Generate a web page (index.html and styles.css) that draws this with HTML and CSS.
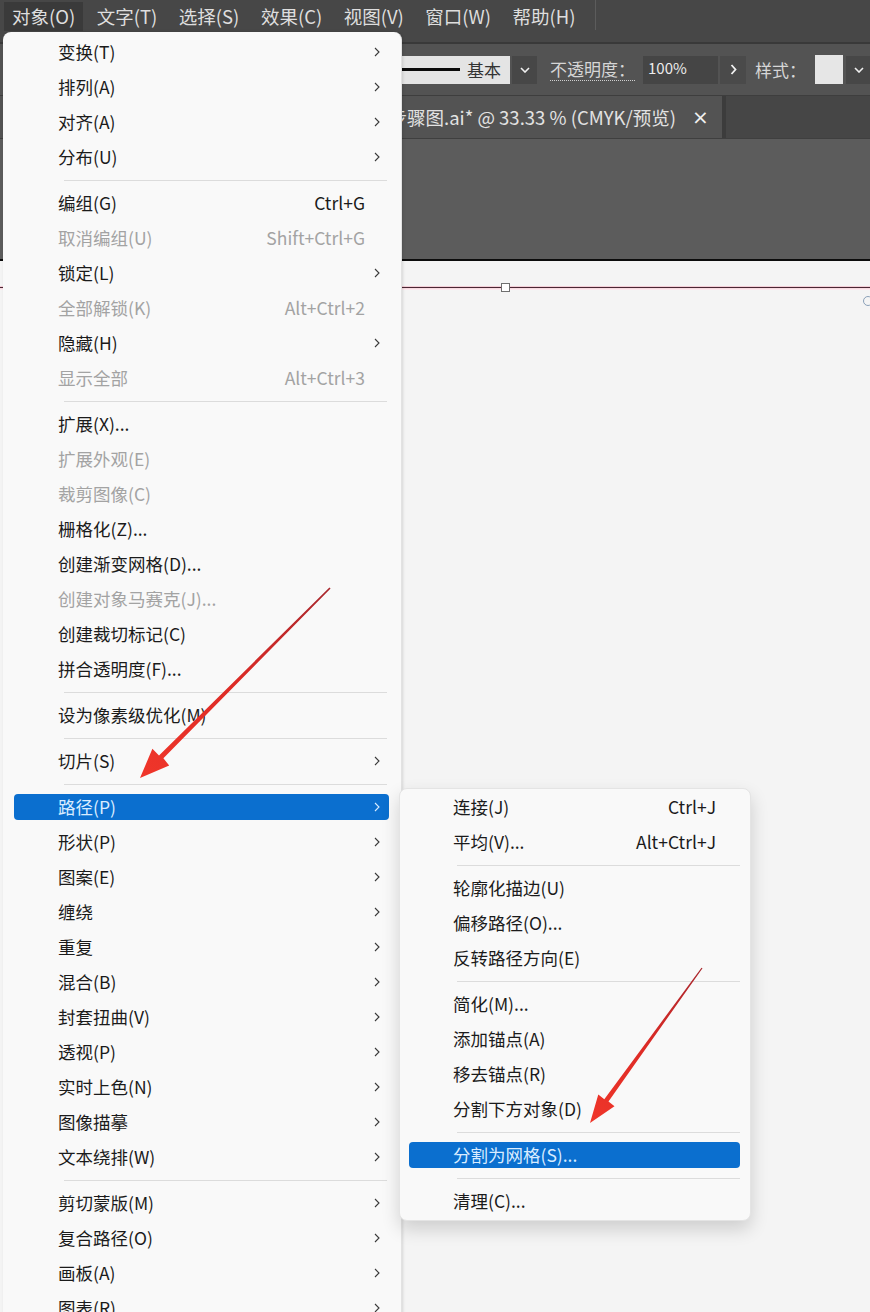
FILE: index.html
```html
<!DOCTYPE html>
<html>
<head>
    <title>对象菜单</title>
    <link rel="stylesheet" href="styles.css">
</head>
<body>
    <div class="app">
        <div class="menubar">
            <span class="top-item current">对象(O)</span>
            <span class="top-item">文字(T)</span>
            <span class="top-item">选择(S)</span>
            <span class="top-item">效果(C)</span>
            <span class="top-item">视图(V)</span>
            <span class="top-item">窗口(W)</span>
            <span class="top-item">帮助(H)</span>
            <span class="bar-split"></span>
        </div>
        <div class="toolbar">
            <div class="stroke-box">
                <span class="stroke-line"></span>
                <span class="stroke-name">基本</span>
            </div>
            <span class="drop"><svg width="10" height="6" viewBox="0 0 10 6"><path d="M1 1 L5 5 L9 1" fill="none" stroke="currentColor" stroke-width="1.6"/></svg></span>
            <span class="tool-label dotted">不透明度：</span>
            <span class="field">100%</span>
            <span class="step"><svg width="7" height="11" viewBox="0 0 7 11"><path d="M1.5 1 L5.5 5.5 L1.5 10" fill="none" stroke="currentColor" stroke-width="1.8"/></svg></span>
            <span class="tool-label style-label">样式：</span>
            <span class="swatch"></span>
            <span class="drop"><svg width="10" height="6" viewBox="0 0 10 6"><path d="M1 1 L5 5 L9 1" fill="none" stroke="currentColor" stroke-width="1.6"/></svg></span>
        </div>
        <div class="tabs">
            <div class="tab">
                <span class="tab-title">步骤图.ai* @ 33.33 % (CMYK/预览)</span>
                <span class="tab-close">×</span>
            </div>
            <div class="tab-rest"></div>
        </div>
        <div class="pasteboard"></div>
        <div class="canvas">
            <div class="artboard-edge"></div>
            <span class="handle"></span>
            <span class="ring"></span>
        </div>
    </div>

    <div class="menu main-menu">
        <div class="item"><span class="label">变换(T)</span><span class="sub"><svg width="6" height="10" viewBox="0 0 6 10"><path d="M1 1 L5 5 L1 9" fill="none" stroke="currentColor" stroke-width="1.1"/></svg></span></div>
        <div class="item"><span class="label">排列(A)</span><span class="sub"><svg width="6" height="10" viewBox="0 0 6 10"><path d="M1 1 L5 5 L1 9" fill="none" stroke="currentColor" stroke-width="1.1"/></svg></span></div>
        <div class="item"><span class="label">对齐(A)</span><span class="sub"><svg width="6" height="10" viewBox="0 0 6 10"><path d="M1 1 L5 5 L1 9" fill="none" stroke="currentColor" stroke-width="1.1"/></svg></span></div>
        <div class="item"><span class="label">分布(U)</span><span class="sub"><svg width="6" height="10" viewBox="0 0 6 10"><path d="M1 1 L5 5 L1 9" fill="none" stroke="currentColor" stroke-width="1.1"/></svg></span></div>
        <div class="sep"></div>
        <div class="item"><span class="label">编组(G)</span><span class="key">Ctrl+G</span><span class="sub"></span></div>
        <div class="item off"><span class="label">取消编组(U)</span><span class="key">Shift+Ctrl+G</span><span class="sub"></span></div>
        <div class="item"><span class="label">锁定(L)</span><span class="sub"><svg width="6" height="10" viewBox="0 0 6 10"><path d="M1 1 L5 5 L1 9" fill="none" stroke="currentColor" stroke-width="1.1"/></svg></span></div>
        <div class="item off"><span class="label">全部解锁(K)</span><span class="key">Alt+Ctrl+2</span><span class="sub"></span></div>
        <div class="item"><span class="label">隐藏(H)</span><span class="sub"><svg width="6" height="10" viewBox="0 0 6 10"><path d="M1 1 L5 5 L1 9" fill="none" stroke="currentColor" stroke-width="1.1"/></svg></span></div>
        <div class="item off"><span class="label">显示全部</span><span class="key">Alt+Ctrl+3</span><span class="sub"></span></div>
        <div class="sep"></div>
        <div class="item"><span class="label">扩展(X)...</span><span class="sub"></span></div>
        <div class="item off"><span class="label">扩展外观(E)</span><span class="sub"></span></div>
        <div class="item off"><span class="label">裁剪图像(C)</span><span class="sub"></span></div>
        <div class="item"><span class="label">栅格化(Z)...</span><span class="sub"></span></div>
        <div class="item"><span class="label">创建渐变网格(D)...</span><span class="sub"></span></div>
        <div class="item off"><span class="label">创建对象马赛克(J)...</span><span class="sub"></span></div>
        <div class="item"><span class="label">创建裁切标记(C)</span><span class="sub"></span></div>
        <div class="item"><span class="label">拼合透明度(F)...</span><span class="sub"></span></div>
        <div class="sep"></div>
        <div class="item"><span class="label">设为像素级优化(M)</span><span class="sub"></span></div>
        <div class="sep"></div>
        <div class="item"><span class="label">切片(S)</span><span class="sub"><svg width="6" height="10" viewBox="0 0 6 10"><path d="M1 1 L5 5 L1 9" fill="none" stroke="currentColor" stroke-width="1.1"/></svg></span></div>
        <div class="sep"></div>
        <div class="item on"><span class="label">路径(P)</span><span class="sub"><svg width="6" height="10" viewBox="0 0 6 10"><path d="M1 1 L5 5 L1 9" fill="none" stroke="currentColor" stroke-width="1.1"/></svg></span></div>
        <div class="item"><span class="label">形状(P)</span><span class="sub"><svg width="6" height="10" viewBox="0 0 6 10"><path d="M1 1 L5 5 L1 9" fill="none" stroke="currentColor" stroke-width="1.1"/></svg></span></div>
        <div class="item"><span class="label">图案(E)</span><span class="sub"><svg width="6" height="10" viewBox="0 0 6 10"><path d="M1 1 L5 5 L1 9" fill="none" stroke="currentColor" stroke-width="1.1"/></svg></span></div>
        <div class="item"><span class="label">缠绕</span><span class="sub"><svg width="6" height="10" viewBox="0 0 6 10"><path d="M1 1 L5 5 L1 9" fill="none" stroke="currentColor" stroke-width="1.1"/></svg></span></div>
        <div class="item"><span class="label">重复</span><span class="sub"><svg width="6" height="10" viewBox="0 0 6 10"><path d="M1 1 L5 5 L1 9" fill="none" stroke="currentColor" stroke-width="1.1"/></svg></span></div>
        <div class="item"><span class="label">混合(B)</span><span class="sub"><svg width="6" height="10" viewBox="0 0 6 10"><path d="M1 1 L5 5 L1 9" fill="none" stroke="currentColor" stroke-width="1.1"/></svg></span></div>
        <div class="item"><span class="label">封套扭曲(V)</span><span class="sub"><svg width="6" height="10" viewBox="0 0 6 10"><path d="M1 1 L5 5 L1 9" fill="none" stroke="currentColor" stroke-width="1.1"/></svg></span></div>
        <div class="item"><span class="label">透视(P)</span><span class="sub"><svg width="6" height="10" viewBox="0 0 6 10"><path d="M1 1 L5 5 L1 9" fill="none" stroke="currentColor" stroke-width="1.1"/></svg></span></div>
        <div class="item"><span class="label">实时上色(N)</span><span class="sub"><svg width="6" height="10" viewBox="0 0 6 10"><path d="M1 1 L5 5 L1 9" fill="none" stroke="currentColor" stroke-width="1.1"/></svg></span></div>
        <div class="item"><span class="label">图像描摹</span><span class="sub"><svg width="6" height="10" viewBox="0 0 6 10"><path d="M1 1 L5 5 L1 9" fill="none" stroke="currentColor" stroke-width="1.1"/></svg></span></div>
        <div class="item"><span class="label">文本绕排(W)</span><span class="sub"><svg width="6" height="10" viewBox="0 0 6 10"><path d="M1 1 L5 5 L1 9" fill="none" stroke="currentColor" stroke-width="1.1"/></svg></span></div>
        <div class="sep"></div>
        <div class="item"><span class="label">剪切蒙版(M)</span><span class="sub"><svg width="6" height="10" viewBox="0 0 6 10"><path d="M1 1 L5 5 L1 9" fill="none" stroke="currentColor" stroke-width="1.1"/></svg></span></div>
        <div class="item"><span class="label">复合路径(O)</span><span class="sub"><svg width="6" height="10" viewBox="0 0 6 10"><path d="M1 1 L5 5 L1 9" fill="none" stroke="currentColor" stroke-width="1.1"/></svg></span></div>
        <div class="item"><span class="label">画板(A)</span><span class="sub"><svg width="6" height="10" viewBox="0 0 6 10"><path d="M1 1 L5 5 L1 9" fill="none" stroke="currentColor" stroke-width="1.1"/></svg></span></div>
        <div class="item"><span class="label">图表(R)</span><span class="sub"><svg width="6" height="10" viewBox="0 0 6 10"><path d="M1 1 L5 5 L1 9" fill="none" stroke="currentColor" stroke-width="1.1"/></svg></span></div>
    </div>

    <div class="menu path-menu">
        <div class="item"><span class="label">连接(J)</span><span class="key">Ctrl+J</span><span class="sub"></span></div>
        <div class="item"><span class="label">平均(V)...</span><span class="key">Alt+Ctrl+J</span><span class="sub"></span></div>
        <div class="sep"></div>
        <div class="item"><span class="label">轮廓化描边(U)</span><span class="sub"></span></div>
        <div class="item"><span class="label">偏移路径(O)...</span><span class="sub"></span></div>
        <div class="item"><span class="label">反转路径方向(E)</span><span class="sub"></span></div>
        <div class="sep"></div>
        <div class="item"><span class="label">简化(M)...</span><span class="sub"></span></div>
        <div class="item"><span class="label">添加锚点(A)</span><span class="sub"></span></div>
        <div class="item"><span class="label">移去锚点(R)</span><span class="sub"></span></div>
        <div class="item"><span class="label">分割下方对象(D)</span><span class="sub"></span></div>
        <div class="sep"></div>
        <div class="item on"><span class="label">分割为网格(S)...</span><span class="sub"></span></div>
        <div class="sep"></div>
        <div class="item"><span class="label">清理(C)...</span><span class="sub"></span></div>
    </div>

    <!-- red annotation arrows -->
    <svg class="marks" width="870" height="1312" viewBox="0 0 870 1312">
        <defs>
            <linearGradient id="redA" gradientUnits="userSpaceOnUse" x1="330" y1="588" x2="140" y2="778">
                <stop offset="0" stop-color="#a8262c"/>
                <stop offset="0.5" stop-color="#dd2b26"/>
                <stop offset="1" stop-color="#f0362a"/>
            </linearGradient>
            <linearGradient id="redB" gradientUnits="userSpaceOnUse" x1="702" y1="968" x2="590" y2="1123">
                <stop offset="0" stop-color="#a8262c"/>
                <stop offset="0.5" stop-color="#dd2b26"/>
                <stop offset="1" stop-color="#f0362a"/>
            </linearGradient>
        </defs>
        <polygon fill="url(#redA)" points="329.4,587.6 159,755.4 152.4,748.8 140,778 169.2,765.6 163.4,758.2 330.6,588.4"/>
        <polygon fill="url(#redB)" points="701.5,967.7 604.3,1099.2 598.3,1094.4 590,1123 614.5,1106.2 608.5,1101.4 702.5,968.3"/>
    </svg>
</body>
</html>
```

FILE: styles.css
```css
body {
    margin: 0;
    width: 870px;
    height: 1312px;
    overflow: hidden;
    position: relative;
    font-family: "Noto Sans CJK SC", "Noto Sans", sans-serif;
    background: #f4f4f4;
}
.app {
    display: flex;
    flex-direction: column;
    height: 1312px;
}
.menubar {
    height: 42px;
    background: #474747;
    border-bottom: 2px solid #393939;
    display: flex;
    align-items: flex-start;
    padding-left: 4px;
    white-space: nowrap;
}
.top-item {
    height: 29px;
    margin-top: 2px;
    line-height: 29px;
    padding: 0 8px;
    margin-right: 5.5px;
    font-size: 18.5px;
    color: #dedede;
}
.top-item.current {
    background: #3a3a3a;
}
.bar-split {
    width: 1px;
    height: 30px;
    background: #5c5c5c;
    margin-left: 6px;
}
.toolbar {
    height: 51px;
    background: #535353;
    display: flex;
    align-items: center;
    padding-left: 300px;
    border-bottom: 1px solid #3e3e3e;
    white-space: nowrap;
    overflow: hidden;
}
.toolbar > * {
    flex-shrink: 0;
}
.stroke-box {
    width: 210px;
    height: 28px;
    background: #e4e4e4;
    display: flex;
    align-items: center;
}
.stroke-line {
    width: 160px;
    height: 3px;
    background: #0a0a0a;
}
.stroke-name {
    margin-left: 7px;
    font-size: 17px;
    color: #333;
}
.drop {
    width: 25px;
    height: 28px;
    margin-left: 2px;
    background: #474747;
    color: #f0f0f0;
    display: flex;
    align-items: center;
    justify-content: center;
}
.tool-label {
    margin-left: 13px;
    font-size: 17px;
    color: #d6d6d6;
    line-height: 22px;
}
.dotted {
    border-bottom: 1px dotted #cfcfcf;
}
.field {
    width: 70px;
    height: 28px;
    margin-left: 8px;
    padding-left: 5px;
    background: #454545;
    color: #ececec;
    font-size: 15px;
    line-height: 24px;
}
.step {
    width: 26px;
    height: 28px;
    margin-left: 2px;
    background: #4a4a4a;
    color: #f2f2f2;
    display: flex;
    align-items: center;
    justify-content: center;
}
.style-label {
    margin-left: 9px;
}
.swatch {
    width: 28px;
    height: 29px;
    margin-left: 9px;
    background: #e6e6e6;
}
.swatch + .drop {
    margin-left: 3px;
}
.tabs {
    height: 42px;
    display: flex;
    background: #444;
}
.tab {
    width: 712px;
    padding-right: 10px;
    background: #535353;
    display: flex;
    align-items: center;
    justify-content: flex-end;
    overflow: hidden;
    white-space: nowrap;
    border-right: 4px solid #3c3c3c;
}
.tab-title {
    font-size: 18.5px;
    color: #e2e2e2;
}
.tab-close {
    margin-left: 16px;
    width: 20px;
    font-size: 20px;
    color: #f0f0f0;
    font-family: "DejaVu Sans", sans-serif;
}
.tab-rest {
    flex: 1;
    background: #464646;
}
.pasteboard {
    height: 120px;
    background: #5c5c5c;
    border-top: 1px solid #3f3f3f;
    border-bottom: 2px solid #0c0c0c;
}
.canvas {
    flex: 1;
    position: relative;
    background: #f4f4f4;
}
.artboard-edge {
    margin-top: 26px;
    height: 1px;
    background: #4a2633;
    box-shadow: 0 -1px 0 #f3cfd8, 0 1px 0 #f7d9e0, 0 2px 0 #fbe9ee;
}
.handle {
    position: absolute;
    left: 501px;
    top: 22px;
    width: 7px;
    height: 7px;
    background: #fff;
    border: 1px solid #6f6f6f;
}
.ring {
    position: absolute;
    left: 863px;
    top: 35px;
    width: 8px;
    height: 8px;
    border: 1.5px solid #8aa0b8;
    border-radius: 50%;
}
.menu {
    position: absolute;
    background: #f9f9f9;
    display: flex;
    flex-direction: column;
    font-size: 17.5px;
    color: #1b1b1b;
    box-sizing: border-box;
}
.main-menu {
    left: 3px;
    top: 32px;
    width: 399px;
    height: 1300px;
    padding-top: 3px;
    border-radius: 8px 8px 0 0;
    border-right: 1px solid #e2e2e2;
    box-shadow: 1px 0 3px rgba(0, 0, 0, 0.12);
}
.path-menu {
    left: 399px;
    top: 788px;
    width: 352px;
    padding-top: 1px;
    padding-bottom: 1px;
    border-radius: 8px;
    border: 1px solid #e4e4e4;
    box-shadow: 0 8px 18px rgba(0, 0, 0, 0.16);
}
.item {
    height: 26px;
    line-height: 26px;
    margin: 4px 12px 5px 11px;
    padding-left: 44px;
    display: flex;
    align-items: center;
    border-radius: 4px;
    white-space: nowrap;
}
.path-menu .item {
    margin: 4px 10px 5px 9px;
}
.label {
    flex: 1;
}
.key {
    color: #1b1b1b;
}
.sub {
    width: 15px;
    padding-left: 9px;
    display: flex;
    align-items: center;
    color: #3a3a3a;
}
.item.off,
.item.off .key {
    color: #a3a3a3;
}
.item.on {
    background: #0b6fcf;
    color: #d9ecff;
}
.item.on .sub {
    color: #d9ecff;
}
.sep {
    height: 1px;
    margin: 5px 14px 5px 61px;
    background: #dcdcdc;
    flex-shrink: 0;
}
.path-menu .sep {
    margin: 5px 10px 5px 57px;
}
.marks {
    position: absolute;
    left: 0;
    top: 0;
    pointer-events: none;
}
```
